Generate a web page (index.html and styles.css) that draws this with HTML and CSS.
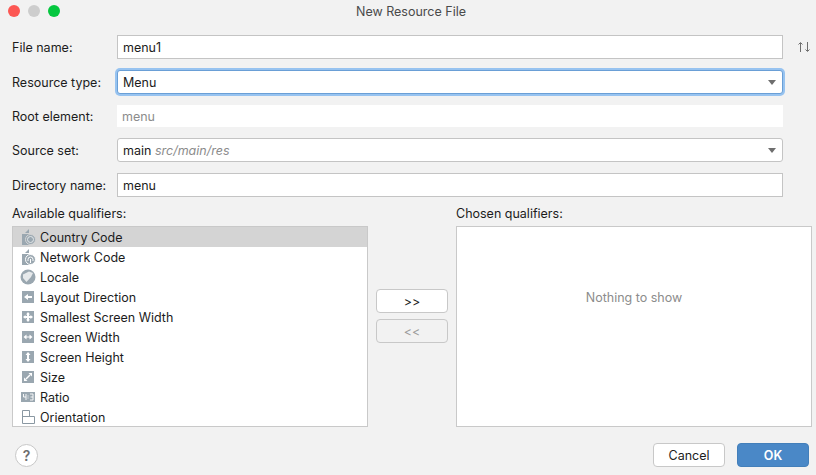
FILE: index.html
```html
<!DOCTYPE html>
<html lang="en">
<head>
<meta charset="UTF-8">
<title>New Resource File</title>
<link rel="stylesheet" href="styles.css">
</head>
<body>
<div class="dialog">
  <header class="titlebar">
    <div class="lights">
      <span class="light red"></span>
      <span class="light gray"></span>
      <span class="light green"></span>
    </div>
    <div class="title">New Resource File</div>
  </header>

  <form class="form">
    <div class="row">
      <label>File name:</label>
      <div class="field">menu1</div>
      <svg class="sort" width="14" height="12" viewBox="0 0 14 12"><path d="M3.5 11V2M1.5 3.5L3.5 1.5L5.5 3.5M10.5 1V10M8.500 8.500L10.500 10.500L12.500 8.500" fill="none" stroke="#6e6e6e" stroke-width="1"/></svg>
    </div>
    <div class="row">
      <label>Resource type:</label>
      <div class="field combo focused">Menu<span class="arrow"></span></div>
    </div>
    <div class="row short">
      <label>Root element:</label>
      <div class="field readonly">menu</div>
    </div>
    <div class="row">
      <label>Source set:</label>
      <div class="field combo">main&nbsp;<em>src/main/res</em><span class="arrow"></span></div>
    </div>
    <div class="row">
      <label>Directory name:</label>
      <div class="field">menu</div>
    </div>
  </form>

  <section class="qualifiers">
    <div class="column">
      <div class="column-title">Available qualifiers:</div>
      <ul class="list">
        <li class="selected">
          <svg class="icon" viewBox="0 0 16 16"><path d="M5 4L9 0V4ZM2 5H10V16H2Z" fill="#9aa7b0"/><circle cx="10.500" cy="10.500" r="5" fill="#9aa7b0" stroke="#d4d4d4"/><circle cx="10.500" cy="10.500" r="3" fill="none" stroke="#e4e8ea"/></svg>
          Country Code
        </li>
        <li>
          <svg class="icon" viewBox="0 0 16 16"><path d="M5 4L9 0V4ZM2 5H10V16H2Z" fill="#9aa7b0"/><circle cx="10.500" cy="10.500" r="5" fill="#9aa7b0" stroke="#fff"/><path d="M8 12V10.500A2.500 2.500 0 0 1 13 10.500V12M10.500 10V14" fill="none" stroke="#fff"/></svg>
          Network Code
        </li>
        <li>
          <svg class="icon" viewBox="0 0 16 16"><circle cx="8" cy="8" r="7.500" fill="#9aa7b0"/><path d="M3 5.500L9 2.500L13 4L11 8L6.500 13L3 9Z" fill="#e6e9eb"/></svg>
          Locale
        </li>
        <li>
          <svg class="icon" viewBox="0 0 16 16"><rect x="2" y="2" width="12" height="12" fill="#9aa7b0"/><path d="M7 7H12V9H7ZM8 5V11L4 8Z" fill="#fff"/></svg>
          Layout Direction
        </li>
        <li>
          <svg class="icon" viewBox="0 0 16 16"><rect x="2" y="2" width="12" height="12" fill="#9aa7b0"/><path d="M8 3L10 5.500H6ZM8 13L6 10.500H10ZM3 8L5.500 6V10ZM13 8L10.500 10V6ZM7 5H9V11H7ZM5 7H11V9H5Z" fill="#fff"/></svg>
          Smallest Screen Width
        </li>
        <li>
          <svg class="icon" viewBox="0 0 16 16"><rect x="2" y="2" width="12" height="12" fill="#9aa7b0"/><path d="M3.500 8L6.500 5.500V10.500ZM12.500 8L9.500 10.500V5.500ZM6 7.500H10V8.500H6Z" fill="#fff"/></svg>
          Screen Width
        </li>
        <li>
          <svg class="icon" viewBox="0 0 16 16"><rect x="2" y="2" width="12" height="12" fill="#9aa7b0"/><path d="M8 3L10.500 6H5.500ZM8 13L5.500 10H10.500ZM7 5H9V11H7Z" fill="#fff"/></svg>
          Screen Height
        </li>
        <li>
          <svg class="icon" viewBox="0 0 16 16"><rect x="2" y="2" width="12" height="12" fill="#9aa7b0"/><path d="M8.500 4H12V7.500ZM7.500 12H4V8.500ZM9.500 5.500L10.500 6.500L6.500 10.500L5.500 9.500Z" fill="#fff"/></svg>
          Size
        </li>
        <li>
          <svg class="icon" viewBox="0 0 16 16"><rect x="1" y="3" width="14" height="10" fill="#9aa7b0"/><path d="M3.500 5V8H6M6 5V11M8 6.500V7.500M8 8.500V9.500M10 5H13V11H10M10.500 8H13" fill="none" stroke="#fff" stroke-width="0.900"/></svg>
          Ratio
        </li>
        <li>
          <svg class="icon" viewBox="0 0 16 16"><path d="M2.500 8V1.500H9.500V7M2 7.500H14.500V14.500H2.500V8" fill="none" stroke="#8a98a2"/></svg>
          Orientation
        </li>
      </ul>
    </div>

    <div class="mover">
      <button type="button" class="btn">&gt;&gt;</button>
      <button type="button" class="btn disabled">&lt;&lt;</button>
    </div>

    <div class="column">
      <div class="column-title">Chosen qualifiers:</div>
      <div class="list empty">Nothing to show</div>
    </div>
  </section>

  <footer class="actions">
    <div class="help">?</div>
    <div class="action-buttons">
      <button type="button" class="btn">Cancel</button>
      <button type="button" class="btn primary">OK</button>
    </div>
  </footer>
</div>
</body>
</html>
```

FILE: styles.css
```css
html, body {
  margin: 0;
  padding: 0;
}
body {
  width: 816px;
  height: 475px;
  overflow: hidden;
  background-color: #f2f2f2;
  color: #1c1c1c;
  font-family: Inter, "Liberation Sans", sans-serif;
  font-size: 12.5px;
}
.dialog {
  display: flex;
  flex-direction: column;
  height: 475px;
}

.titlebar {
  display: flex;
  align-items: center;
  height: 22px;
  padding-left: 8px;
}
.lights {
  display: flex;
  gap: 8px;
}
.light {
  width: 12px;
  height: 12px;
  border-radius: 50%;
}
.red { background-color: #fc5753; }
.gray { background-color: #cdcdcd; }
.green { background-color: #05c73f; }
.title {
  flex-grow: 1;
  text-align: center;
  color: #4a4a4a;
  padding-right: 54px;
}

.form {
  display: flex;
  flex-direction: column;
  gap: 11px;
  padding: 13px 0 0 12px;
}
.row {
  display: flex;
  align-items: center;
  height: 24px;
}
.row label {
  width: 105px;
}
.field {
  display: flex;
  align-items: center;
  box-sizing: border-box;
  width: 666px;
  height: 24px;
  padding-left: 5px;
  background-color: #fff;
  border: 1px solid #c4c4c4;
}
.combo {
  position: relative;
  border-radius: 3px;
}
.focused {
  border-color: #6a9fd6;
  box-shadow: 0 0 0 2px #97c3f0;
}
.arrow {
  position: absolute;
  right: 6px;
  top: 9px;
  width: 0;
  height: 0;
  border-left: 4.5px solid transparent;
  border-right: 4.5px solid transparent;
  border-top: 5px solid #6e6e6e;
}
.field em {
  color: #8c8c8c;
}
.short {
  height: 22px;
}
.readonly {
  height: 22px;
  color: #8c8c8c;
  border: none;
}
.sort {
  margin-left: 14px;
}

.qualifiers {
  display: flex;
  padding: 10px 4px 0 12px;
}
.column {
  display: flex;
  flex-direction: column;
  width: 356px;
}
.column-title {
  height: 19px;
  line-height: 14px;
}
.list {
  box-sizing: border-box;
  height: 201px;
  margin: 0;
  padding: 0;
  list-style: none;
  background-color: #fff;
  border: 1px solid #c9c9c9;
  overflow: hidden;
}
.list li {
  display: flex;
  align-items: center;
  gap: 4px;
  height: 20px;
  padding-left: 7px;
}
.list .selected {
  background-color: #d4d4d4;
}
.icon {
  width: 16px;
  height: 16px;
  flex-shrink: 0;
}
.empty {
  text-align: center;
  padding-top: 63px;
  color: #8c8c8c;
}
.mover {
  display: flex;
  flex-direction: column;
  gap: 6px;
  width: 72px;
  margin: 82px 8px 0;
}

.btn {
  box-sizing: border-box;
  width: 72px;
  height: 24px;
  padding: 0;
  background-color: #fff;
  border: 1px solid #c8c8c8;
  border-radius: 4px;
  color: #1c1c1c;
  font-family: inherit;
  font-size: inherit;
}
.btn.disabled {
  background-color: #f2f2f2;
  color: #9c9c9c;
}
.btn.primary {
  background-color: #4a88c7;
  border-color: #437fba;
  color: #fff;
  font-weight: 600;
}

.actions {
  display: flex;
  justify-content: space-between;
  align-items: center;
  padding: 16px 7px 0 15px;
}
.help {
  display: flex;
  align-items: center;
  justify-content: center;
  box-sizing: border-box;
  width: 23px;
  height: 23px;
  background-color: #fff;
  border: 1px solid #c8c8c8;
  border-radius: 50%;
  color: #6e6e6e;
  font-size: 14px;
  font-weight: 600;
}
.action-buttons {
  display: flex;
  gap: 12px;
}
```
